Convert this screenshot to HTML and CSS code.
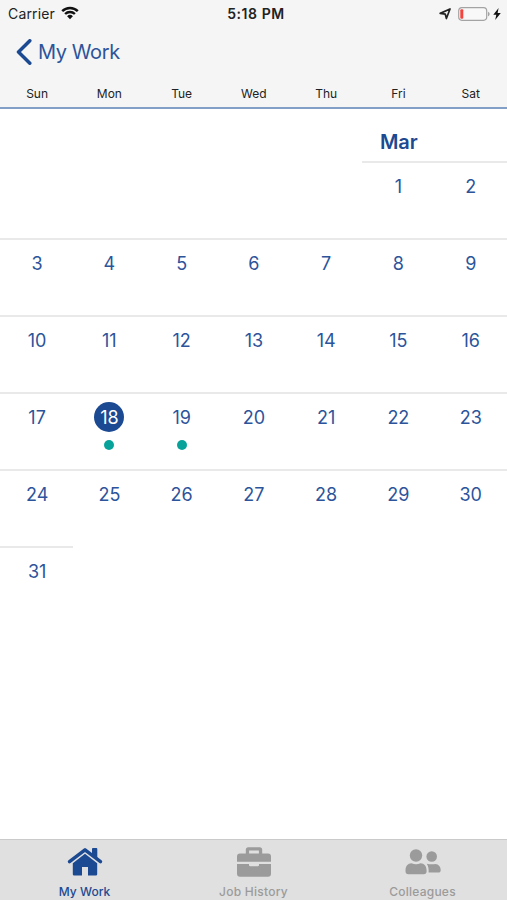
FILE: index.html
```html
<!DOCTYPE html>
<html lang="en">
<head>
<meta charset="UTF-8" />
<meta name="viewport" content="width=device-width, initial-scale=1" />
<title>My Work</title>
<link rel="stylesheet" href="styles.css">
</head>
<body>
<div class="app">
  <header class="header">
    <div class="status-bar">
      <div class="status-left">
        <span class="carrier">Carrier</span>
        <svg class="wifi" width="18" height="14" viewBox="0 0 18 14">
          <path d="M1.2 5.2a11 11 0 0 1 15.600 0M4.100 8a7 7 0 0 1 9.800 0" fill="none" stroke="#111" stroke-width="2.4" />
          <path d="M9 13.2 6.1 10.3a4.1 4.1 0 0 1 5.8 0z" fill="#111" />
        </svg>
      </div>
      <span class="time">5:18 PM</span>
      <div class="status-right">
        <svg width="12" height="12" viewBox="0 0 12 12">
          <path d="M11 1 7.4 10.5 6.3 6.2 1.2 5.4z" fill="none" stroke="#222" stroke-width="1.7" stroke-linejoin="round" />
        </svg>
        <svg class="battery" width="32" height="14" viewBox="0 0 32 14">
          <rect x="0.7" y="0.7" width="28" height="12.6" rx="3.2" fill="#f8f8f8" stroke="#a3a3a3" stroke-width="1.2" />
          <rect x="2.3" y="2.3" width="3" height="9.4" rx="1" fill="#f2453f" />
          <path d="M30 4.7c2.2.9 2.2 3.7 0 4.6z" fill="#a3a3a3" />
        </svg>
        <svg width="8" height="12" viewBox="0 0 8 12">
          <path d="M5.6 0 0.3 6.7h3L2.2 12 7.8 5H4.6z" fill="#111" />
        </svg>
      </div>
    </div>
    <a class="back" href="#">
      <svg width="16" height="26" viewBox="0 0 16 26">
        <path d="M13.8 1.8 2.5 13l11.3 11.2" fill="none" stroke="#1c4a92" stroke-width="3.5" stroke-linecap="round" stroke-linejoin="round" />
      </svg>
      <span>My Work</span>
    </a>
    <div class="weekdays">
      <span>Sun</span><span>Mon</span><span>Tue</span><span>Wed</span><span>Thu</span><span>Fri</span><span>Sat</span>
    </div>
  </header>

  <main class="calendar">
    <h1 class="month">Mar</h1>
    <div class="week">
      <div class="day friday">1</div>
      <div class="day">2</div>
    </div>
    <div class="week">
      <div class="day">3</div><div class="day">4</div><div class="day">5</div><div class="day">6</div><div class="day">7</div><div class="day">8</div><div class="day">9</div>
    </div>
    <div class="week">
      <div class="day">10</div><div class="day">11</div><div class="day">12</div><div class="day">13</div><div class="day">14</div><div class="day">15</div><div class="day">16</div>
    </div>
    <div class="week">
      <div class="day">17</div>
      <div class="day"><span class="today">18</span><i class="dot"></i></div>
      <div class="day">19<i class="dot"></i></div>
      <div class="day">20</div><div class="day">21</div><div class="day">22</div><div class="day">23</div>
    </div>
    <div class="week">
      <div class="day">24</div><div class="day">25</div><div class="day">26</div><div class="day">27</div><div class="day">28</div><div class="day">29</div><div class="day">30</div>
    </div>
    <div class="week">
      <div class="day">31</div>
    </div>
  </main>

  <nav class="tabs">
    <a class="tab active" href="#">
      <svg width="36" height="30" viewBox="0 0 36 30">
        <path d="M2.5 14.7 18 2.8l15.5 11.9" fill="none" stroke="currentColor" stroke-width="3.4" stroke-linecap="round" stroke-linejoin="round" />
        <path d="M25 2a.9.9 0 0 1 .9-.9h3.500a.9.9 0 0 1 .9.9v9.500l-5.300-4z" fill="currentColor" />
        <path d="M5.8 16.2 18 6.8l12.2 9.4v11a1.300 1.300 0 0 1-1.300 1.300h-7.900V20h-6v8.500H7.100a1.300 1.300 0 0 1-1.300-1.300z" fill="currentColor" />
      </svg>
      <span>My Work</span>
    </a>
    <a class="tab" href="#">
      <svg width="36" height="30" viewBox="0 0 36 30">
        <path d="M9.8 8V2.8A2.5 2.5 0 0 1 12.3.3h11.4a2.5 2.5 0 0 1 2.5 2.5V8h-3.3V3.4h-9.8V8z" fill="currentColor" />
        <path d="M4 6.5h28a3 3 0 0 1 3 3v5.2H1V9.5a3 3 0 0 1 3-3zM1 17h12v1a1.3 1.3 0 0 0 1.3 1.3h7.4A1.3 1.3 0 0 0 23 18v-1h12v9.8a3 3 0 0 1-3 3H4a3 3 0 0 1-3-3z" fill="currentColor" />
      </svg>
      <span>Job History</span>
    </a>
    <a class="tab" href="#">
      <svg width="36" height="30" viewBox="0 0 36 30">
        <circle cx="11" cy="8.5" r="6.2" fill="currentColor" />
        <circle cx="26.7" cy="9.5" r="5.3" fill="currentColor" />
        <path d="M6.5 16.2c3 1.3 6 1.3 9 0 3.8 0 6.1 2.9 6.1 7.2v.8c0 2-1 3-3 3H3.5c-2 0-3-1-3-3v-.8c0-4.3 2.3-7.2 6-7.2zM21.8 16.7c3 .8 6.4.8 8.5.3 3.4.2 5.4 2.8 5.4 6.3 0 1.5-.9 2.3-2.4 2.3h-9.700c.2-3.500-.2-6.500-1.800-8.900z" fill="currentColor" />
      </svg>
      <span>Colleagues</span>
    </a>
  </nav>
</div>
</body>
</html>
```

FILE: styles.css
```css
* {
  box-sizing: border-box;
}
body {
  margin: 0;
  background: #fff;
  font-family: Inter, "Liberation Sans", sans-serif;
  color: #222;
}
a {
  color: inherit;
  text-decoration: none;
}
svg {
  display: block;
  flex: none;
}
.app {
  display: flex;
  flex-direction: column;
  height: 100vh;
  overflow: hidden;
}

/* Header */
.header {
  height: 109px;
  background: #f5f5f5;
  border-bottom: 2px solid #819fc7;
}
.status-bar {
  display: grid;
  grid-template-columns: 1fr auto 1fr;
  align-items: center;
  height: 27px;
  padding: 0 6px 0 8px;
  font-size: 14px;
}
.status-left,
.status-right {
  display: flex;
  align-items: center;
}
.status-left {
  gap: 6px;
}
.carrier {
  letter-spacing: 0.15px;
}
.status-right {
  justify-content: flex-end;
  gap: 3px;
}
.battery {
  margin-left: 4px;
}
.wifi {
  margin-top: -1px;
}
.time {
  padding-left: 3px;
  font-weight: 600;
  letter-spacing: 0.55px;
}
.back {
  display: flex;
  align-items: center;
  gap: 6px;
  height: 50px;
  padding-left: 16px;
  font-size: 20px;
  letter-spacing: -0.4px;
  color: #2c549b;
}
.weekdays {
  display: grid;
  grid-template-columns: repeat(7, 72.25px);
  padding: 8px 0 0 1px;
  font-size: 12px;
  line-height: 18px;
  text-align: center;
}

/* Calendar */
.calendar {
  flex: 1;
}
.month {
  margin: 0 0 0 380px;
  height: 52px;
  padding-top: 19px;
  font-size: 20px;
  line-height: 28px;
  font-weight: 600;
  letter-spacing: -0.1px;
  color: #1c4a92;
}
.week {
  display: grid;
  grid-template-columns: 73.25px repeat(5, 72.25px) 1fr;
  height: 77px;
}
.day {
  display: flex;
  flex-direction: column;
  align-items: center;
  border-top: 2px solid #e9e9ea;
  padding-top: 9px;
  font-size: 18px;
  line-height: 30px;
  color: #2c549b;
}
.day:first-child:not(.friday) {
  padding-left: 1px;
}
.friday {
  grid-column: 6;
}
.today {
  width: 30px;
  height: 30px;
  margin: -1px 0 1px;
  border-radius: 50%;
  background: #1c4a92;
  color: #fff;
  line-height: 32px;
  text-align: center;
}
.dot {
  width: 10px;
  height: 10px;
  margin-top: 7px;
  border-radius: 50%;
  background: #07a39a;
}

/* Bottom tabs */
.tabs {
  display: grid;
  grid-template-columns: repeat(3, 1fr);
  height: 61px;
  background: #e0e0e0;
  border-top: 1px solid #cacaca;
}
.tab {
  display: flex;
  flex-direction: column;
  align-items: center;
  padding-top: 7px;
  font-size: 12px;
  line-height: 16px;
  font-weight: 500;
  letter-spacing: 0.25px;
  color: #9b9b9b;
}
.tab span {
  margin-top: 7px;
}
.tab.active {
  color: #1c4a92;
}
.active span {
  letter-spacing: 0;
}
```
